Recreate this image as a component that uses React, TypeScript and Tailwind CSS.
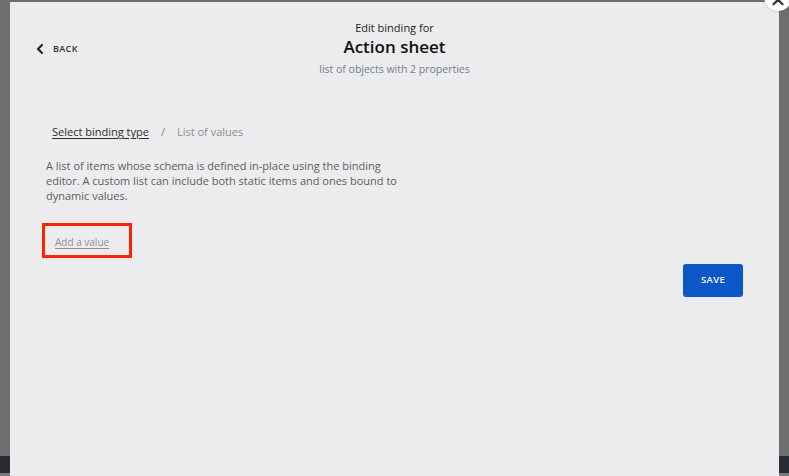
import { ChevronLeft, ChevronUp } from "lucide-react";

const font = { fontFamily: "'Open Sans', Lato, sans-serif" };

export default function App() {
  return (
    <div className="relative h-[476px] w-full overflow-hidden bg-[#6e6e6e]" style={font}>
      {/* page behind the overlay */}
      <div className="flex h-full flex-col">
        <div className="h-[456px]" />
        <div className="h-[17px] bg-[#272b33]" />
        <div className="flex-1 bg-[#7a7a7a]" />
      </div>

      {/* modal */}
      <div className="absolute left-[10px] top-[2px] h-[474px] w-[769px] bg-[#ececee]">
        <button className="absolute left-[754px] top-[-19px] flex h-[28px] w-[28px] items-end justify-center rounded-full bg-white text-[#2d3440] shadow">
          <ChevronUp className="h-[18px] w-[18px]" strokeWidth={3} />
        </button>

        <header className="grid grid-cols-[1fr_auto_1fr] pt-[19px]">
          <div className="flex items-start pl-[22px] pt-[20px]">
            <button className="flex items-center gap-[5px] text-[#222]">
              <ChevronLeft className="h-[16px] w-[16px]" strokeWidth={3.2} />
              <span className="text-[9px] font-semibold tracking-[0.04em] text-[#333]">BACK</span>
            </button>
          </div>
          <div className="flex flex-col items-center">
            <div className="text-[11px] leading-[14px] text-[#1c1c1c]">Edit binding for</div>
            <h1 className="mt-[2px] text-[17px] font-semibold leading-[19px] text-[#111]">Action sheet</h1>
            <div className="mt-[6px] text-[10.5px] leading-[14px] text-[#6f7b97]">
              list of objects with 2 properties
            </div>
          </div>
          <div />
        </header>

        <section className="px-[36px] pt-[48px]">
          <nav className="ml-[6px] flex items-center text-[11px] leading-[16px]">
            <a className="text-[#2c2c2c] underline underline-offset-2">Select binding type</a>
            <span className="mx-[12px] text-[#888]">/</span>
            <span className="text-[#8c8c8c]">List of values</span>
          </nav>

          <p className="mt-[18px] w-[358px] text-[11px] leading-[15px] text-[#5c5c5c]">
            A list of items whose schema is defined in-place using the binding editor. A custom list
            can include both static items and ones bound to dynamic values.
          </p>

          <div className="ml-[-4px] mt-[20px] flex h-[35px] w-[90px] items-center border-[3px] border-[#ff2200] pl-[10px] pt-[3px]">
            <a className="text-[10px] text-[#909096] underline underline-offset-2">Add a value</a>
          </div>

          <div className="mt-[6px] flex justify-end">
            <button className="flex h-[33px] w-[60px] items-center justify-center rounded-[3px] bg-[#0b57c8] text-[9.5px] font-semibold tracking-[0.04em] text-white">
              SAVE
            </button>
          </div>
        </section>
      </div>
    </div>
  );
}
